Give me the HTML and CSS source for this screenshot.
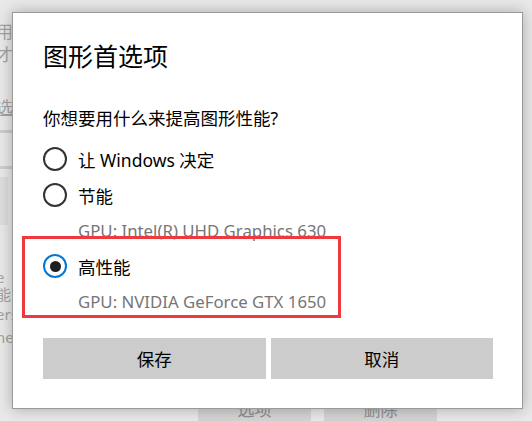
FILE: index.html
```html
<!DOCTYPE html>
<html lang="zh-CN">
  <head>
    <meta charset="UTF-8" />
    <title>图形首选项</title>
    <link rel="stylesheet" href="styles.css">
  </head>

  <body>
    <!-- 背后的设置页面（被遮住，只露出边缘） -->
    <div class="page">
      <div class="page-side">
        <div class="ghost g-yong">用</div>
        <div class="ghost g-cai">才</div>
        <div class="ghost g-xuan">选</div>
        <div class="ghost-line line-a"></div>
        <div class="ghost-line line-b"></div>
        <div class="ghost-box"></div>
        <div class="ghost small g-e">e</div>
        <div class="ghost small g-neng">能</div>
        <div class="ghost small g-ers">ers</div>
        <div class="ghost small g-ne">ne</div>
      </div>
      <div class="page-actions">
        <span class="ghost-btn">选项</span>
        <span class="ghost-btn">删除</span>
      </div>
    </div>

    <div class="dialog">
      <h2 class="dialog-title">图形首选项</h2>
      <p class="question">你想要用什么来提高图形性能?</p>

      <div class="options">
        <label class="option">
          <span class="radio"></span>
          <span class="option-label">让 Windows 决定</span>
        </label>
        <label class="option">
          <span class="radio"></span>
          <span class="option-label">节能</span>
        </label>
        <div class="gpu">GPU: Intel(R) UHD Graphics 630</div>
        <label class="option">
          <span class="radio checked"></span>
          <span class="option-label">高性能</span>
        </label>
        <div class="gpu">GPU: NVIDIA GeForce GTX 1650</div>
      </div>

      <div class="actions">
        <button class="btn">保存</button>
        <button class="btn">取消</button>
      </div>

      <!-- 标注框 -->
      <div class="highlight"></div>
    </div>
  </body>
</html>
```

FILE: styles.css
```css
html,
body {
  margin: 0;
  height: 100%;
  overflow: hidden;
}

body {
  background: #e9e9e9;
  font-family: "Noto Sans", "Noto Sans CJK SC", sans-serif;
  color: #000;
}

/* 背景页面 */
.page {
  display: flex;
  flex-direction: column;
  height: 100%;
}

.page-side {
  flex-shrink: 0;
  margin-left: -4px;
  padding-top: 22px;
  display: flex;
  flex-direction: column;
  height: 368px;
  box-sizing: border-box;
}

.ghost {
  color: #a3a3a3;
  font-size: 17px;
  line-height: 20px;
  height: 20px;
}

.ghost.small {
  font-size: 15px;
  line-height: 17px;
  height: 17px;
}

.g-cai {
  margin-top: 3px;
}

.g-xuan {
  margin-top: 33px;
  text-decoration: underline;
}

.ghost-line {
  height: 3px;
  width: 20px;
  background: #cdcdcd;
}

.line-a {
  margin-top: 12px;
}

.line-b {
  margin-top: 33px;
}

.ghost-box {
  margin-top: 8px;
  margin-left: 4px;
  width: 8px;
  height: 48px;
  background: #dedede;
}

.g-e {
  margin-top: 44px;
}

.g-ers {
  margin-top: 3px;
}

.g-ne {
  margin-top: 6px;
}

.page-actions {
  flex-shrink: 0;
  display: flex;
  gap: 13px;
  margin-left: 198px;
  margin-top: 24px;
}

.ghost-btn {
  width: 113px;
  height: 40px;
  background: #d4d4d4;
  color: #8f8f8f;
  font-size: 17px;
  line-height: 36px;
  text-align: center;
}

/* 对话框 */
.dialog {
  position: absolute;
  top: 12px;
  left: 12px;
  width: 450px;
  height: 340px;
  padding: 26px 29px 29px 30px;
  background: #fff;
  border: 1px solid #9a9a9a;
  box-shadow: 0 0 14px rgba(0, 0, 0, 0.28);
}

.dialog-title {
  margin: 0;
  font-size: 25px;
  font-weight: normal;
  line-height: 34px;
}

.question {
  margin: 33px 0 0 0;
  font-size: 17.5px;
  line-height: 24px;
}

.options {
  margin-top: 11px;
  display: flex;
  flex-direction: column;
}

.option {
  display: flex;
  align-items: center;
  height: 36px;
  font-size: 17.5px;
}

.radio {
  width: 24px;
  height: 24px;
  box-sizing: border-box;
  border: 2.5px solid #333;
  border-radius: 50%;
  margin-right: 11px;
  display: flex;
  align-items: center;
  justify-content: center;
}

.radio.checked {
  border-color: #0078d7;
}

.radio.checked::after {
  content: "";
  width: 11px;
  height: 11px;
  border-radius: 50%;
  background: #1f1f1f;
}

.gpu {
  height: 35px;
  line-height: 35px;
  padding-left: 35px;
  font-size: 16.8px;
  color: #767676;
}

.actions {
  display: flex;
  gap: 5px;
  margin-top: 19px;
}

.btn {
  flex: 1;
  height: 41px;
  border: none;
  background: #cccccc;
  font-family: inherit;
  font-size: 17.5px;
  color: #000;
  padding: 0;
}

.highlight {
  position: absolute;
  left: 9px;
  top: 223px;
  width: 313px;
  height: 76px;
  border: 3.5px solid #ef3a3d;
}
```
